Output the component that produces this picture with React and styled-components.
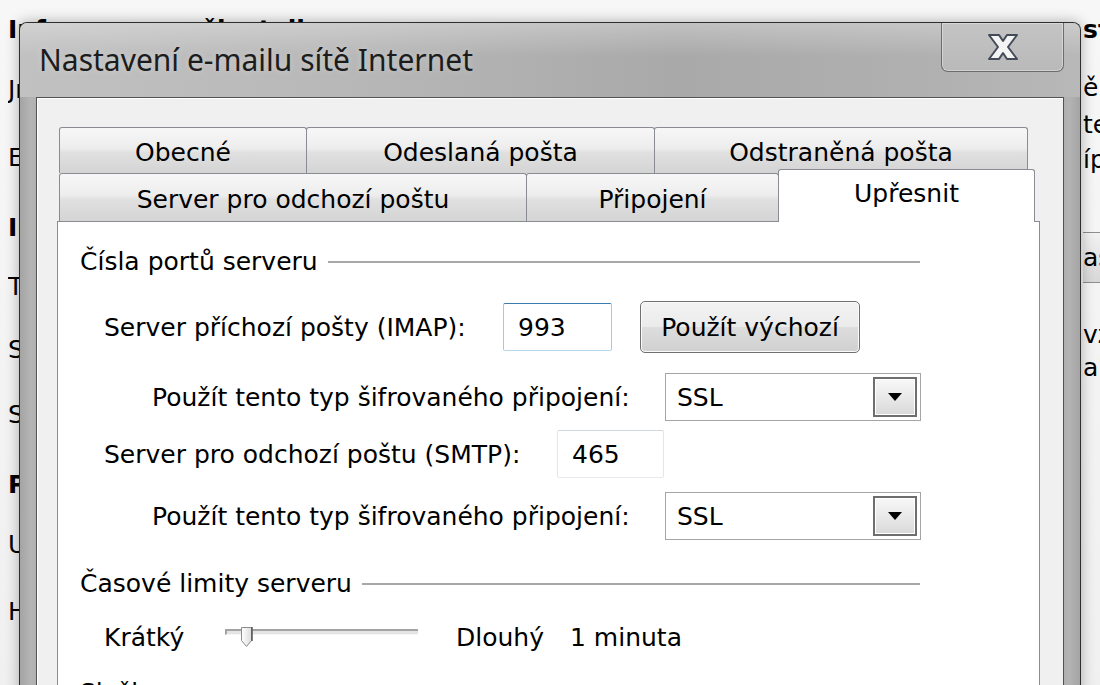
import React from 'react'
import styled, { createGlobalStyle } from 'styled-components'

const GlobalStyle = createGlobalStyle`
  html, body {
    margin: 0;
    padding: 0;
  }
  body {
    background: #f0f0f0;
    font-family: "DejaVu Sans", Verdana, sans-serif;
  }
`

const leftLines = [
  { text: 'Informace o uživateli', bold: true, mt: 15 },
  { text: 'Jméno:', mt: 30 },
  { text: 'E-mailová adresa:', mt: 38 },
  { text: 'Informace o serveru', bold: true, mt: 40 },
  { text: 'Typ účtu:', mt: 29 },
  { text: 'Server příchozí pošty:', mt: 33 },
  { text: 'Server odchozí pošty (SMTP):', mt: 35 },
  { text: 'Přihlašovací údaje', bold: true, mt: 40 },
  { text: 'Uživatelské jméno:', mt: 30 },
  { text: 'Heslo:', mt: 37 },
]

const Arrow = () => (
  <svg width="14" height="8" viewBox="0 0 14 8">
    <path d="M0 0h14L7 8z" fill="#000" />
  </svg>
)

export default function App() {
  return (
    <>
      <GlobalStyle />
      <Desktop>
        <BackPage>
          <BackColumn>
            {leftLines.map((line, i) => (
              <BackLine key={i} $mt={line.mt} $bold={line.bold}>{line.text}</BackLine>
            ))}
          </BackColumn>
          <BackColumn $pad={2}>
            <BackLine $mt={15} $bold>st</BackLine>
            <BackLine $mt={28}>ěr</BackLine>
            <BackLine $mt={7}>te</BackLine>
            <BackLine $mt={5}>íp</BackLine>
            <BackButton>as</BackButton>
            <BackLine $mt={37}>vz</BackLine>
            <BackLine $mt={3}>al</BackLine>
          </BackColumn>
        </BackPage>

        <Dialog>
          <TitleBar>
            <Title>Nastavení e-mailu sítě Internet</Title>
            <CloseButton>
              <svg width="32" height="28" viewBox="0 0 32 28">
                <path
                  d="M2 2h10l4 6 4-6h10l-9 12 9 12H20l-4-6-4 6H2l9-12z"
                  fill="#f4f4f4"
                  stroke="#434a58"
                  strokeWidth="2"
                  strokeLinejoin="round"
                />
              </svg>
            </CloseButton>
          </TitleBar>

          <Client>
            <TabRow $h={46} $pl={3}>
              <Tab $w={248}>Obecné</Tab>
              <Tab $w={349}>Odeslaná pošta</Tab>
              <Tab $w={374}>Odstraněná pošta</Tab>
            </TabRow>
            <TabRow $h={48} $pl={3}>
              <Tab $w={468}>Server pro odchozí poštu</Tab>
              <Tab $w={253}>Připojení</Tab>
              <Tab $w={257} $active>Upřesnit</Tab>
            </TabRow>

            <Panel>
              <GroupHeader>Čísla portů serveru</GroupHeader>

              <FieldRow $mt={24} $h={52} $indent={24}>
                <Label $w={399}>Server příchozí pošty (IMAP):</Label>
                <TextInput $w={109} $focused readOnly value="993" />
                <PushButton>Použít výchozí</PushButton>
              </FieldRow>

              <FieldRow $mt={20} $h={48} $indent={72}>
                <Label $w={513}>Použít tento typ šifrovaného připojení:</Label>
                <Select>
                  SSL
                  <DropButton><Arrow /></DropButton>
                </Select>
              </FieldRow>

              <FieldRow $mt={9} $h={48} $indent={24}>
                <Label $w={453}>Server pro odchozí poštu (SMTP):</Label>
                <TextInput $w={107} readOnly value="465" />
              </FieldRow>

              <FieldRow $mt={14} $h={48} $indent={72}>
                <Label $w={513}>Použít tento typ šifrovaného připojení:</Label>
                <Select>
                  SSL
                  <DropButton><Arrow /></DropButton>
                </Select>
              </FieldRow>

              <GroupHeader $mt={29}>Časové limity serveru</GroupHeader>

              <FieldRow $mt={23} $h={30} $indent={24}>
                <Label $w={121}>Krátký</Label>
                <Track>
                  <Thumb>
                    <svg width="14" height="22" viewBox="0 0 14 22">
                      <defs>
                        <linearGradient id="thumbFill" x1="0" y1="0" x2="1" y2="0">
                          <stop offset="0" stopColor="#ffffff" />
                          <stop offset="1" stopColor="#dcdcdc" />
                        </linearGradient>
                      </defs>
                      <path d="M1.5 1.5h10v13l-5 6-5-6z" fill="url(#thumbFill)" stroke="#8c8c8c" />
                      <path d="M12 1v14" stroke="#555" strokeWidth="1.5" />
                    </svg>
                  </Thumb>
                </Track>
                <Label $w={114}>Dlouhý</Label>
                <Label>1 minuta</Label>
              </FieldRow>

              <GroupHeader $mt={26}>Složky</GroupHeader>
            </Panel>
          </Client>
        </Dialog>
      </Desktop>
    </>
  )
}

const Desktop = styled.div`
position: relative;
width: 1100px;
height: 685px;
overflow: hidden;
background: linear-gradient(180deg, #f7f7f7 0%, #f0f0f0 100%);
`

const BackPage = styled.div`
display: grid;
grid-template-columns: 1073px 19px;
padding-left: 8px;
font-size: 25px;
color: #000;
`

const BackColumn = styled.div`
display: flex;
flex-direction: column;
overflow: hidden;
white-space: nowrap;
padding-left: ${({ $pad }) => $pad || 0}px;
`

const BackLine = styled.div`
height: 30px;
line-height: 30px;
margin-top: ${({ $mt }) => $mt}px;
font-weight: ${({ $bold }) => ($bold ? 700 : 400)};
`

const BackButton = styled.div`
margin-top: 57px;
height: 49px;
line-height: 49px;
border-top: 1px solid #8e8e8e;
border-bottom: 1px solid #8e8e8e;
background: linear-gradient(180deg, #f2f2f2 0%, #e4e4e4 50%, #d8d8d8 100%);
`

const Dialog = styled.div`
position: absolute;
left: 19px;
top: 22px;
width: 1062px;
height: 720px;
box-sizing: border-box;
display: flex;
flex-direction: column;
border: 1px solid #2e2e2e;
border-bottom: none;
border-radius: 8px 8px 0 0;
background: linear-gradient(90deg, #a4a4a4 0%, #b4b4b4 1%, #adadad 2%, #adadad 98%, #b3b3b3 99%, #a4a4a4 100%);
box-shadow: 0 0 14px rgba(0, 0, 0, 0.3);
`

const TitleBar = styled.div`
height: 74px;
flex: none;
display: flex;
align-items: flex-start;
padding: 0 16px 0 19px;
border-radius: 7px 7px 0 0;
background:
  linear-gradient(180deg, rgba(255, 255, 255, 0.28) 0%, rgba(255, 255, 255, 0) 45%),
  linear-gradient(90deg, #c1c1c1 0%, #b8b8b8 30%, #a9a9a9 62%, #b0b0b0 85%, #b8b8b8 100%);
`

const Title = styled.div`
height: 74px;
line-height: 74px;
font-family: "Noto Sans", "DejaVu Sans", sans-serif;
font-size: 30px;
color: #1c1c1c;
text-shadow: 0 0 6px rgba(255, 255, 255, 0.35);
`

const CloseButton = styled.div`
margin-left: auto;
width: 123px;
height: 49px;
box-sizing: border-box;
display: flex;
align-items: center;
justify-content: center;
border: 1px solid #6c6c6c;
border-top: none;
border-radius: 0 0 7px 7px;
background: linear-gradient(180deg, #c4c4c4 0%, #b9b9b9 100%);
box-shadow: inset 0 0 0 1px rgba(255, 255, 255, 0.35);
`

const Client = styled.div`
flex: 1;
margin: 0 16px;
padding: 29px 23px 0 20px;
border: 1px solid #525252;
border-bottom: none;
background: #f0f0f0;
box-shadow: inset 1px 1px 0 #ffffff;
`

const TabRow = styled.div`
display: flex;
align-items: flex-start;
height: ${({ $h }) => $h}px;
padding-left: ${({ $pl }) => $pl}px;
`

const Tab = styled.div`
flex: none;
width: ${({ $w }) => $w}px;
height: ${({ $active }) => ($active ? 'calc(100% + 5px)' : '100%')};
margin-top: ${({ $active }) => ($active ? -4 : 0)}px;
margin-left: -1px;
box-sizing: border-box;
position: relative;
z-index: ${({ $active }) => ($active ? 2 : 1)};
display: flex;
align-items: center;
justify-content: center;
padding: ${({ $active }) => ($active ? '0 0 6px' : '3px 0 0')};
border: 1px solid #898c95;
border-bottom: none;
border-radius: 3px 3px 0 0;
background: ${({ $active }) => ($active ? '#ffffff' : 'linear-gradient(180deg, #f7f7f7 0%, #ededed 45%, #e0e0e0 55%, #d4d4d4 100%)')};
font-size: 25px;
color: #000;
white-space: nowrap;
`

const Panel = styled.div`
height: 520px;
display: flex;
flex-direction: column;
padding: 25px 0 0 22px;
border: 1px solid #898c95;
border-bottom: none;
background: #ffffff;
font-size: 25px;
color: #000;
`

const GroupHeader = styled.div`
display: flex;
align-items: center;
width: 840px;
height: 30px;
line-height: 30px;
margin-top: ${({ $mt }) => $mt || 0}px;
white-space: nowrap;
&::after {
  content: '';
  flex: 1;
  height: 2px;
  margin-left: 10px;
  background: #a8a8a8;
}
`

const FieldRow = styled.div`
display: flex;
align-items: center;
height: ${({ $h }) => $h}px;
margin-top: ${({ $mt }) => $mt}px;
padding-left: ${({ $indent }) => $indent}px;
`

const Label = styled.div`
flex: none;
width: ${({ $w }) => ($w ? `${$w}px` : 'auto')};
white-space: nowrap;
`

const TextInput = styled.input`
width: ${({ $w }) => $w}px;
height: 48px;
box-sizing: border-box;
margin: 0;
padding: 0 0 0 14px;
border: 1px solid;
border-color: ${({ $focused }) => ($focused ? '#3d7bad #a4c9e3 #b7d9ed #a4c9e3' : '#d3d8de #e2e6eb #e6eaee #e2e6eb')};
border-radius: 2px;
background: #fff;
font-family: "DejaVu Sans", Verdana, sans-serif;
font-size: 25px;
color: #000;
outline: none;
`

const PushButton = styled.button`
width: 220px;
height: 52px;
margin: 0 0 0 28px;
padding: 0;
box-sizing: border-box;
border: 1px solid #707070;
border-radius: 5px;
background: linear-gradient(180deg, #f3f3f3 0%, #ebebeb 50%, #dddddd 51%, #d0d0d0 100%);
box-shadow: inset 0 0 0 1px #fbfbfb;
font-family: "DejaVu Sans", Verdana, sans-serif;
font-size: 25px;
color: #000;
`

const Select = styled.div`
width: 256px;
height: 48px;
box-sizing: border-box;
display: flex;
align-items: center;
padding: 0 3px 0 11px;
border: 1px solid #a5a5a5;
background: #fff;
`

const DropButton = styled.div`
margin-left: auto;
width: 44px;
height: 40px;
box-sizing: border-box;
display: flex;
align-items: center;
justify-content: center;
border: 2px solid #6e6e6e;
background: linear-gradient(180deg, #f8f8f8 0%, #e6e6e6 60%, #d9d9d9 100%);
box-shadow: inset 0 0 0 1px #ffffff;
`

const Track = styled.div`
position: relative;
flex: none;
align-self: flex-start;
width: 193px;
height: 6px;
margin: 7px 38px 0 0;
box-sizing: border-box;
border-top: 2px solid #a3a3a3;
border-left: 2px solid #a3a3a3;
border-bottom: 1px solid #f6f6f6;
background: #e4e4e4;
`

const Thumb = styled.div`
position: absolute;
left: 13px;
top: -6px;
width: 14px;
height: 22px;
`
